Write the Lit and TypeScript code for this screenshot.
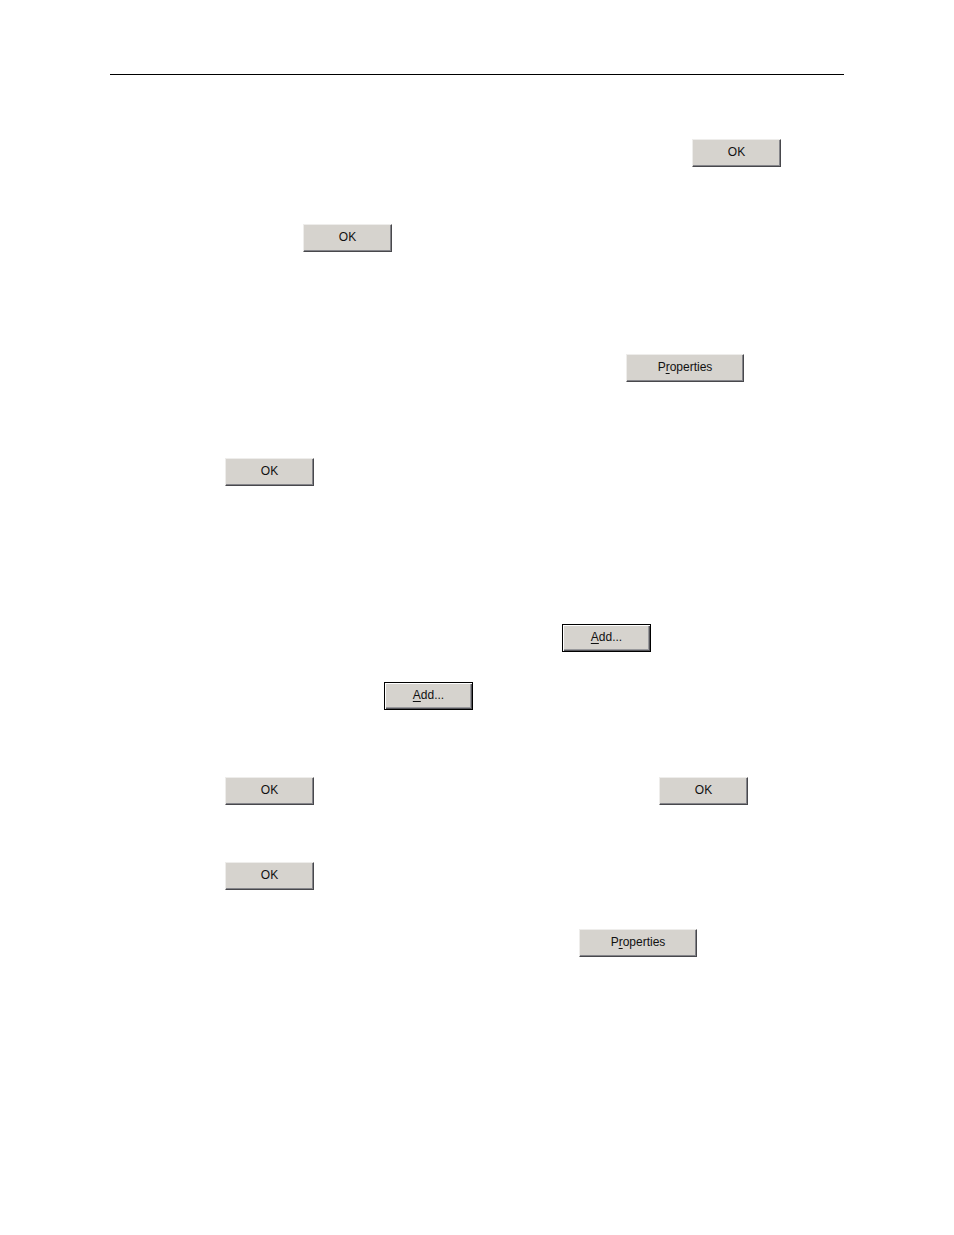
import { LitElement, html, css } from "lit";
import { customElement } from "lit/decorators.js";

@customElement("app-root")
export class AppRoot extends LitElement {
  static styles = css`
    :host {
      display: block;
      background: #fff;
      font-family: "Liberation Sans", Arial, sans-serif;
    }
    .page {
      padding: 74px 110px 278px;
    }
    .rule {
      margin: 0 0 64px;
      border: 0;
      border-top: 1px solid #000;
    }
    .row {
      display: flex;
      height: 28px;
    }
    .setup { padding-left: 582px; margin-bottom: 57px; }
    .confirm { padding-left: 193px; margin-bottom: 102px; }
    .properties { padding-left: 516px; margin-bottom: 76px; }
    .step { padding-left: 115px; margin-bottom: 57px; gap: 345px; }
    .section-end { margin-bottom: 138px; }
    .add { padding-left: 452px; margin-bottom: 30px; }
    .add-again { padding-left: 274px; margin-bottom: 67px; }
    .last-step { margin-bottom: 39px; }
    .last { padding-left: 469px; }
    button {
      flex: none;
      box-sizing: border-box;
      width: 88px;
      height: 28px;
      margin: 0;
      padding: 0 0 2px;
      border: 1px solid;
      border-color: #eeedeb #48484c #48484c #eeedeb;
      border-radius: 0;
      box-shadow: inset -1px -1px #85858a;
      background: #d6d3ce;
      color: #111;
      font: 12px/20px "Liberation Sans", Arial, sans-serif;
      text-align: center;
    }
    .row button { width: 89px; }
    .row .wide { width: 118px; }
    .default {
      border-color: #000;
      box-shadow: inset 1px 1px #fff, inset -1px -1px #55555a, inset -2px -2px #99999c;
    }
    u { text-underline-offset: 2px; text-decoration-thickness: 1px; }
  `;

  private ok() {
    return html`<button type="button">OK</button>`;
  }

  private add() {
    return html`<button type="button" class="default"><u>A</u>dd...</button>`;
  }

  private props() {
    return html`<button type="button" class="wide">P<u>r</u>operties</button>`;
  }

  render() {
    return html`
      <main class="page">
        <hr class="rule" />
        <div class="row setup">${this.ok()}</div>
        <div class="row confirm">${this.ok()}</div>
        <div class="row properties">${this.props()}</div>
        <div class="row step section-end">${this.ok()}</div>
        <div class="row add">${this.add()}</div>
        <div class="row add-again">${this.add()}</div>
        <div class="row step">${this.ok()}${this.ok()}</div>
        <div class="row step last-step">${this.ok()}</div>
        <div class="row last">${this.props()}</div>
      </main>
    `;
  }
}
